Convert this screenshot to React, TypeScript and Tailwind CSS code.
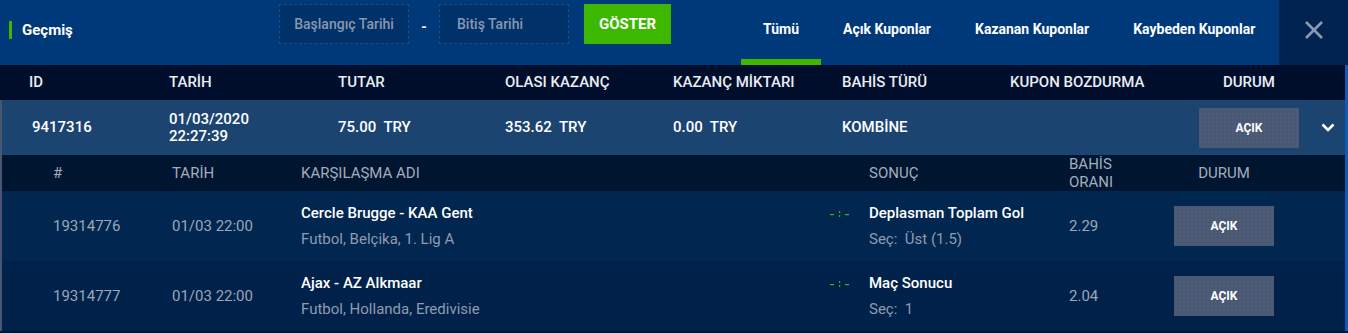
import React from "react";

const F = "font-['Roboto',_'Liberation_Sans',_sans-serif]";

function XIcon() {
  return (
    <svg width="20" height="20" viewBox="0 0 20 20">
      <path d="M2 2 L18 18 M18 2 L2 18" stroke="#8d99ad" strokeWidth="2.6" strokeLinecap="butt" fill="none" />
    </svg>
  );
}

function Chevron() {
  return (
    <svg width="14" height="9" viewBox="0 0 14 9">
      <path d="M1.5 1.5 L7 7 L12.5 1.5" stroke="#ffffff" strokeWidth="2.6" fill="none" />
    </svg>
  );
}

function AcikBtn() {
  return (
    <div className="w-[100px] h-[40px] flex items-center justify-center bg-[#4a5874] bg-[radial-gradient(rgba(255,255,255,0.07)_0.6px,transparent_0.8px)] bg-[size:4px_4px] text-white text-[12px] font-bold">
      AÇIK
    </div>
  );
}

function Score() {
  return (
    <svg width="20" height="10" viewBox="0 0 20 10">
      <rect x="0" y="5" width="4" height="1.2" fill="#3db700" />
      <rect x="9" y="2" width="1.2" height="2" fill="#3db700" />
      <rect x="9" y="6" width="1.2" height="2" fill="#3db700" />
      <rect x="15" y="5" width="4" height="1.2" fill="#3db700" />
    </svg>
  );
}

const matches = [
  {
    id: "19314776",
    date: "01/03 22:00",
    name: "Cercle Brugge - KAA Gent",
    league: "Futbol, Belçika, 1. Lig A",
    market: "Deplasman Toplam Gol",
    pick: "Üst (1.5)",
    odd: "2.29",
    bg: "bg-[#01264f]",
  },
  {
    id: "19314777",
    date: "01/03 22:00",
    name: "Ajax - AZ Alkmaar",
    league: "Futbol, Hollanda, Eredivisie",
    market: "Maç Sonucu",
    pick: "1",
    odd: "2.04",
    bg: "bg-[#00224a]",
  },
];

export default function App() {
  return (
    <div className={`w-[1348px] h-[333px] overflow-hidden bg-[#001530] ${F}`}>
      {/* Top header */}
      <div className="h-[65px] flex bg-[#00397a]">
        <div className="w-[279px] h-[60px] flex items-center">
          <div className="ml-[9px] w-[3px] h-[18px] bg-[#3db700]" />
          <div className="ml-[10px] text-white text-[15px] font-bold">Geçmiş</div>
        </div>
        <div className="flex items-start pt-[4px]">
          <div className="w-[130px] h-[40px] border border-dashed border-[#1f4c86] bg-[#003169] flex items-center justify-center text-[#8898b1] text-[14px] font-medium">
            Başlangıç Tarihi
          </div>
          <div className="w-[30px] h-[40px] flex items-center justify-center text-white text-[14px] font-bold pt-[6px]">-</div>
          <div className="w-[130px] h-[40px] border border-dashed border-[#1f4c86] bg-[#003169] flex items-center pl-[17px] text-[#8898b1] text-[14px] font-medium">
            Bitiş Tarihi
          </div>
          <div className="ml-[15px] w-[87px] h-[40px] bg-[#3db700] flex items-center justify-center text-white text-[15px] font-bold">
            GÖSTER
          </div>
        </div>
        <div className="ml-[70px] flex h-full">
          <div className="relative px-[22px] h-full flex items-center pb-[6px] text-white text-[14px] font-bold">
            Tümü
            <div className="absolute left-0 right-0 bottom-0 h-[6px] bg-[#3db700]" />
          </div>
          <div className="px-[22px] h-full flex items-center pb-[6px] text-white text-[14px] font-bold">Açık Kuponlar</div>
          <div className="px-[22px] h-full flex items-center pb-[6px] text-white text-[14px] font-bold">Kazanan Kuponlar</div>
          <div className="px-[22px] h-full flex items-center pb-[6px] text-white text-[14px] font-bold">Kaybeden Kuponlar</div>
        </div>
        <div className="ml-auto w-[69px] h-full bg-[#00244f] flex items-center justify-center pb-[5px]">
          <XIcon />
        </div>
      </div>

      {/* Table area */}
      <div className="flex">
        <div className="flex-1">
          {/* Header row */}
          <div className="h-[35px] flex items-center bg-[#000e2c] text-[#e9edf3] text-[15px] font-medium">
            <div className="w-[169px] pl-[29px]">ID</div>
            <div className="w-[168px]">TARİH</div>
            <div className="w-[168px] pl-[1px]">TUTAR</div>
            <div className="w-[168px]">OLASI KAZANÇ</div>
            <div className="w-[168px]">KAZANÇ MİKTARI</div>
            <div className="w-[168px] pl-[1px]">BAHİS TÜRÜ</div>
            <div className="w-[168px] pl-[1px]">KUPON BOZDURMA</div>
            <div className="w-[144px] text-center">DURUM</div>
          </div>

          <div className="border-l-[2px] border-[#4a5670]">
            {/* Main row */}
            <div className="h-[55px] flex items-center bg-[#1c4471] text-white text-[15px] font-medium">
              <div className="w-[167px] pl-[30px]">9417316</div>
              <div className="w-[168px] leading-[17px]">
                <div>01/03/2020</div>
                <div>22:27:39</div>
              </div>
              <div className="w-[168px] pl-[1px]">75.00&nbsp; TRY</div>
              <div className="w-[168px]">353.62&nbsp; TRY</div>
              <div className="w-[168px]">0.00&nbsp; TRY</div>
              <div className="w-[168px] pl-[1px]">KOMBİNE</div>
              <div className="w-[168px]" />
              <div className="w-[144px] flex justify-center">
                <AcikBtn />
              </div>
              <div className="flex-1 flex items-center pl-[-1px]">
                <Chevron />
              </div>
            </div>

            {/* Sub header */}
            <div className="h-[36px] flex items-center bg-[#00152f] text-[#a3adbe] text-[15px]">
              <div className="w-[170px] pl-[51px]">#</div>
              <div className="w-[129px]">TARİH</div>
              <div className="w-[529px]">KARŞILAŞMA ADI</div>
              <div className="w-[39px]" />
              <div className="w-[200px]">SONUÇ</div>
              <div className="w-[105px] leading-[18px]">
                <div>BAHİS</div>
                <div>ORANI</div>
              </div>
              <div className="w-[100px] text-center">DURUM</div>
            </div>

            {/* Sub rows */}
            {matches.map((m) => (
              <div key={m.id} className={`h-[70px] flex items-center ${m.bg} text-[15px]`}>
                <div className="w-[170px] pl-[51px] text-[#9ba6b8]">{m.id}</div>
                <div className="w-[129px] text-[#9ba6b8]">{m.date}</div>
                <div className="w-[529px] flex flex-col gap-[8px] leading-[18px]">
                  <div className="text-white font-medium">{m.name}</div>
                  <div className="text-[#8e9bb0]">{m.league}</div>
                </div>
                <div className="w-[39px] self-start pt-[18px]">
                  <Score />
                </div>
                <div className="w-[200px] flex flex-col gap-[8px] leading-[18px]">
                  <div className="text-white font-medium">{m.market}</div>
                  <div className="text-[#8e9bb0]">
                    Seç:&nbsp; {m.pick}
                  </div>
                </div>
                <div className="w-[105px] text-[#9ba6b8]">{m.odd}</div>
                <div className="w-[100px]">
                  <AcikBtn />
                </div>
              </div>
            ))}
          </div>
        </div>
        <div className="w-[3px] self-stretch bg-[#0a5cb8]" />
      </div>
    </div>
  );
}
